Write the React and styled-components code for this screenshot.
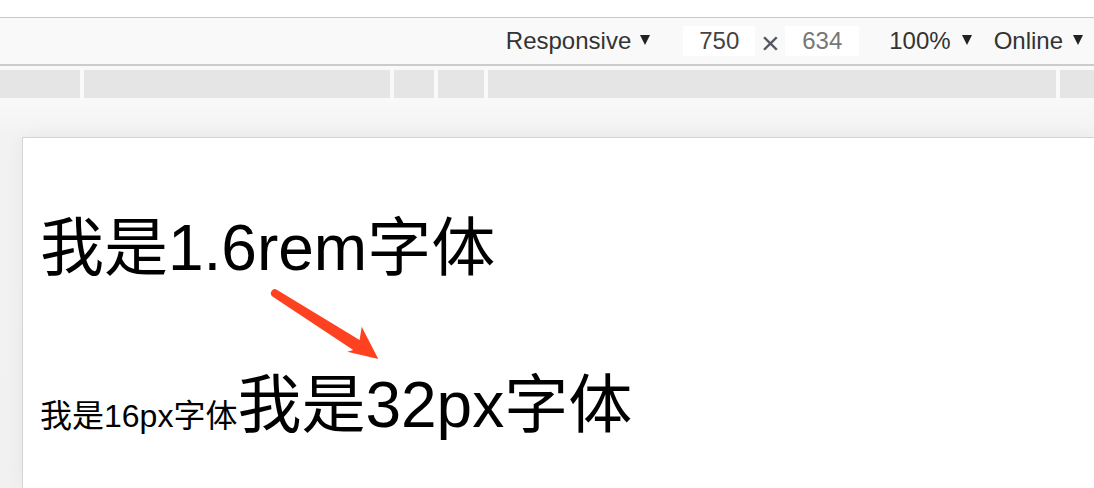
import React from 'react';
import styled, { createGlobalStyle } from 'styled-components';

const GlobalStyle = createGlobalStyle`
  html, body {
    margin: 0;
    padding: 0;
    background: #fff;
    overflow: hidden;
  }
`;

const Page = styled.div`
  width: 1094px;
  height: 488px;
  display: flex;
  flex-direction: column;
  font-family: "Liberation Sans", Arial, sans-serif;
`;

const TopStrip = styled.div`
  height: 17px;
  background: #fff;
  border-bottom: 1px solid #c9c9c9;
`;

const Toolbar = styled.div`
  height: 46px;
  background: #f9f9f9;
  border-bottom: 2px solid #cbcbcb;
  display: flex;
  align-items: center;
  justify-content: flex-end;
  padding-right: 11px;
  color: #333;
  font-size: 24px;
`;

const Dropdown = styled.div`
  display: flex;
  align-items: center;
  margin-left: ${props => props.gap || 0}px;
`;

const Caret = styled.span`
  width: 0;
  height: 0;
  margin-left: ${props => props.space || 10}px;
  margin-top: -2px;
  border-left: 5.5px solid transparent;
  border-right: 5.5px solid transparent;
  border-top: 10px solid #222;
`;

const SizeInput = styled.div`
  width: ${props => props.w || 72}px;
  height: 30px;
  background: #fff;
  display: flex;
  align-items: center;
  justify-content: center;
  color: ${props => props.muted ? '#777' : '#444'};
  margin-left: ${props => props.gap || 0}px;
`;

const Times = styled.span`
  width: 30px;
  text-align: center;
  font-size: 32px;
  line-height: 30px;
  color: #555;
  padding-top: 4px;
`;

const SegmentBar = styled.div`
  display: flex;
  gap: 4px;
  height: 28px;
  padding-top: 4px;
  background: #f9f9f9;
`;

const Segment = styled.div`
  flex: ${props => props.w ? `0 0 ${props.w}px` : '1'};
  background: #e5e5e5;
`;

const Viewport = styled.div`
  flex: 1;
  display: flex;
  padding: 39px 0 0 22px;
  background: linear-gradient(180deg, #f9f9f9 0%, #f2f2f2 40px, #f1f1f1 100%);
`;

const Frame = styled.div`
  position: relative;
  flex: 1;
  background: #fff;
  border-top: 1px solid #d4d4d4;
  border-left: 1px solid #d4d4d4;
  box-shadow: 0 0 18px rgba(0, 0, 0, 0.05);
  padding: 78px 0 0 17px;
  font-family: "Liberation Sans", "Noto Sans CJK SC", sans-serif;
  color: #000;
`;

const TextLine = styled.div`
  font-size: ${props => props.size || 64}px;
  line-height: 64px;
  white-space: nowrap;
  margin-top: ${props => props.top || 0}px;
`;

const Small = styled.span`
  font-size: 32px;
  line-height: 1;
`;

const Arrow = styled.svg`
  position: absolute;
  left: 244px;
  top: 147px;
`;

export default function App() {
  return (
    <Page>
      <GlobalStyle />
      <TopStrip />
      <Toolbar>
        <Dropdown>Responsive<Caret space={9} /></Dropdown>
        <SizeInput gap={33}>750</SizeInput>
        <Times>×</Times>
        <SizeInput muted w={74}>634</SizeInput>
        <Dropdown gap={30}>100%<Caret space={11} /></Dropdown>
        <Dropdown gap={22}>Online<Caret /></Dropdown>
      </Toolbar>
      <SegmentBar>
        <Segment w={80} />
        <Segment w={306} />
        <Segment w={40} />
        <Segment w={46} />
        <Segment w={568} />
        <Segment />
      </SegmentBar>
      <Viewport>
        <Frame>
          <TextLine>我是1.6rem字体</TextLine>
          <TextLine top={93}>
            <Small>我是16px字体</Small>我是32px字体
          </TextLine>
          <Arrow width="116" height="80" viewBox="0 0 116 80">
            <path
              d="M10.2 4.9 L92.6 55 L94.7 41.7 L111.3 74 L80.3 66.7 L86.2 65 L5.8 11.7 A4 4 0 0 1 10.2 4.9 Z"
              fill="#fe4221"
            />
          </Arrow>
        </Frame>
      </Viewport>
    </Page>
  );
}
